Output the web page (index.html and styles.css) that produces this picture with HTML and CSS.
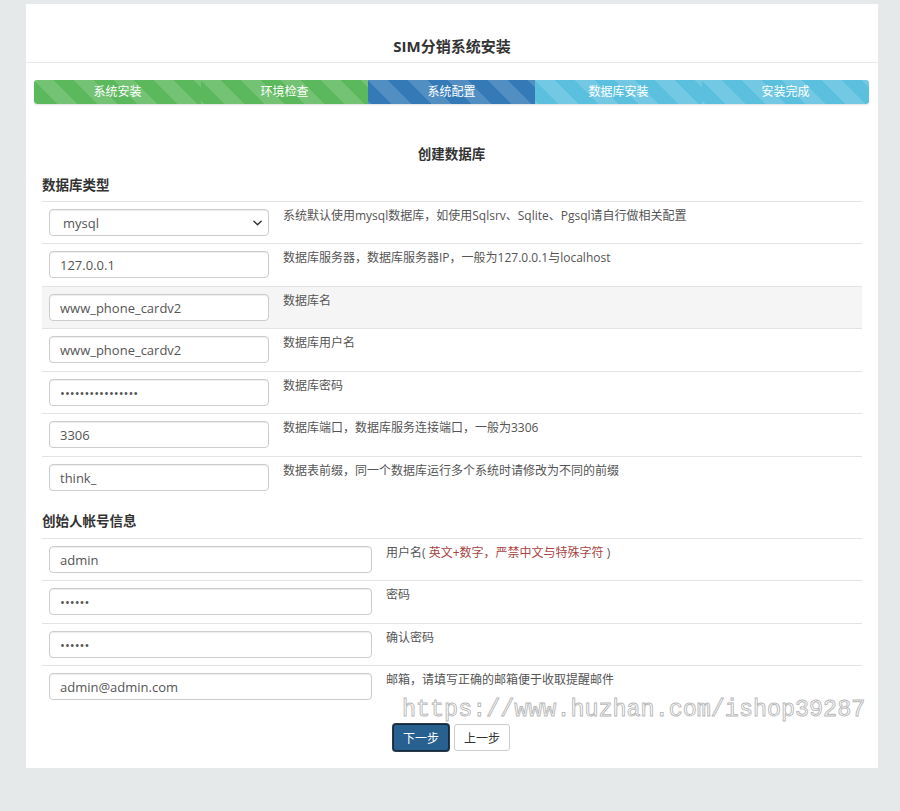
FILE: index.html
```html
<!DOCTYPE html>
<html lang="zh-CN">
<head>
<meta charset="utf-8">
<title>SIM分销系统安装</title>
<link rel="stylesheet" href="styles.css">
</head>
<body>
<div class="page">
  <div class="header"><h1 class="title">SIM分销系统安装</h1></div>
  <div class="content">
    <div class="steps">
      <div class="step step-done">系统安装</div>
      <div class="step step-done">环境检查</div>
      <div class="step step-active">系统配置</div>
      <div class="step step-todo">数据库安装</div>
      <div class="step step-todo">安装完成</div>
    </div>

    <h2 class="form-title">创建数据库</h2>

    <div class="section">
      <h3 class="section-title">数据库类型</h3>
      <table class="form-table">
        <tbody>
          <tr>
            <td class="cell-input"><select class="field field-select"><option>mysql</option></select></td>
            <td class="cell-desc">系统默认使用mysql数据库，如使用Sqlsrv、Sqlite、Pgsql请自行做相关配置</td>
          </tr>
          <tr>
            <td class="cell-input"><input class="field" type="text" value="127.0.0.1"></td>
            <td class="cell-desc">数据库服务器，数据库服务器IP，一般为127.0.0.1与localhost</td>
          </tr>
          <tr class="row-hover">
            <td class="cell-input"><input class="field" type="text" value="www_phone_cardv2"></td>
            <td class="cell-desc">数据库名</td>
          </tr>
          <tr>
            <td class="cell-input"><input class="field" type="text" value="www_phone_cardv2"></td>
            <td class="cell-desc">数据库用户名</td>
          </tr>
          <tr>
            <td class="cell-input"><input class="field" type="password" value="abcdefghijklmnop"></td>
            <td class="cell-desc">数据库密码</td>
          </tr>
          <tr>
            <td class="cell-input"><input class="field" type="text" value="3306"></td>
            <td class="cell-desc">数据库端口，数据库服务连接端口，一般为3306</td>
          </tr>
          <tr>
            <td class="cell-input"><input class="field" type="text" value="think_"></td>
            <td class="cell-desc">数据表前缀，同一个数据库运行多个系统时请修改为不同的前缀</td>
          </tr>
        </tbody>
      </table>
    </div>

    <div class="section section-admin">
      <h3 class="section-title">创始人帐号信息</h3>
      <table class="form-table form-table-wide">
        <tbody>
          <tr>
            <td class="cell-input"><input class="field" type="text" value="admin"></td>
            <td class="cell-desc">用户名( <span class="warn">英文+数字，严禁中文与特殊字符</span> )</td>
          </tr>
          <tr>
            <td class="cell-input"><input class="field" type="password" value="123456"></td>
            <td class="cell-desc">密码</td>
          </tr>
          <tr>
            <td class="cell-input"><input class="field" type="password" value="123456"></td>
            <td class="cell-desc">确认密码</td>
          </tr>
          <tr>
            <td class="cell-input"><input class="field" type="text" value="admin@admin.com"></td>
            <td class="cell-desc">邮箱，请填写正确的邮箱便于收取提醒邮件</td>
          </tr>
        </tbody>
      </table>
    </div>

    <div class="actions">
      <button class="btn btn-primary" type="button">下一步</button>
      <button class="btn btn-default" type="button">上一步</button>
    </div>
  </div>
  <div class="watermark">https://www.huzhan.com/ishop39287</div>
</div>
</body>
</html>
```

FILE: styles.css
```css
* { box-sizing: border-box; }

html, body {
  margin: 0;
  padding: 0;
}

body {
  background: #e6e9e9;
  font-family: "Open Sans", "Noto Sans CJK SC", sans-serif;
  color: #333;
  padding-top: 4px;
  height: 811px;
  overflow: hidden;
}

.page {
  position: relative;
  width: 852px;
  margin-left: 26px;
  background: #fff;
  padding-bottom: 17px;
}

.header {
  padding: 30px 0 4px;
  border-bottom: 1px solid #e8e8e8;
  text-align: center;
}

.title {
  margin: 0;
  font-size: 15px;
  line-height: 24px;
  font-weight: 700;
  color: #333;
}

.content {
  padding: 17px 9px 0 8px;
}

.steps {
  display: flex;
  height: 24px;
  border-radius: 3px;
  overflow: hidden;
  box-shadow: 0 1px 2px rgba(0,0,0,.12);
}

.step {
  flex: 1;
  text-align: center;
  font-size: 12px;
  line-height: 24px;
  color: #fff;
  background-image: linear-gradient(45deg, rgba(255,255,255,.15) 25%, transparent 25%, transparent 50%, rgba(255,255,255,.15) 50%, rgba(255,255,255,.15) 75%, transparent 75%, transparent);
  background-size: 40px 40px;
}

.step-done { background-color: #5cb85c; }
.step-active { background-color: #337ab7; }
.step-todo { background-color: #5bc0de; }

.form-title {
  margin: 40px 0 0;
  text-align: center;
  font-size: 13.5px;
  line-height: 20px;
  font-weight: 700;
  color: #333;
}

.section {
  padding: 0 7px 0 8px;
}

.section-title {
  margin: 11px 0 6px;
  font-size: 13.5px;
  line-height: 20px;
  font-weight: 700;
  color: #333;
}

.section-admin .section-title {
  margin-top: 13px;
  margin-bottom: 7px;
}

.form-table {
  width: 100%;
  border-collapse: collapse;
}

.form-table td {
  border-top: 1px solid #e3e3e3;
  padding: 7px;
  vertical-align: top;
}

.form-table tr:nth-child(even) td {
  padding-bottom: 8px;
}

.cell-input { width: 234px; }
.form-table-wide .cell-input { width: 337px; }

.cell-desc {
  font-size: 12px;
  line-height: 14.4px;
  color: #555;
}

.row-hover td { background: #f5f5f5; }

.warn { color: #a94442; }

.field {
  display: block;
  width: 100%;
  height: 27px;
  margin: 0;
  padding: 0 10px;
  font-family: "Open Sans", "Noto Sans CJK SC", sans-serif;
  font-size: 13px;
  color: #555;
  background: #fff;
  border: 1px solid #ccc;
  border-radius: 4px;
  box-shadow: inset 0 1px 1px rgba(0,0,0,.075);
  outline: none;
}

.field-select {
  -webkit-appearance: none;
  appearance: none;
  padding-left: 13px;
  background-image: url("data:image/svg+xml;utf8,<svg xmlns='http://www.w3.org/2000/svg' width='10' height='6' viewBox='0 0 10 6'><path d='M1 1l4 4 4-4' fill='none' stroke='%23333' stroke-width='1.6' stroke-linecap='round' stroke-linejoin='round'/></svg>");
  background-repeat: no-repeat;
  background-position: right 6px center;
  background-size: 9px 6px;
}

.actions {
  display: flex;
  justify-content: center;
  gap: 5px;
  margin-top: 16px;
}

.btn {
  height: 27px;
  padding: 0 9px;
  font-family: "Noto Sans CJK SC", sans-serif;
  font-size: 12px;
  line-height: 25px;
  border-radius: 3px;
  cursor: pointer;
}

.btn-primary {
  color: #fff;
  background: #286090;
  border: 1px solid #122b40;
  box-shadow: 0 0 0 1px #2b3b4a;
}

.btn-default {
  color: #333;
  background: #fff;
  border: 1px solid #ccc;
}

.watermark {
  position: absolute;
  left: 376px;
  top: 693px;
  font-family: "Liberation Mono", monospace;
  font-size: 23.4px;
  line-height: 26px;
  color: #fff;
  -webkit-text-stroke: 0.9px #b8b8b8;
  white-space: nowrap;
  pointer-events: none;
}
```
